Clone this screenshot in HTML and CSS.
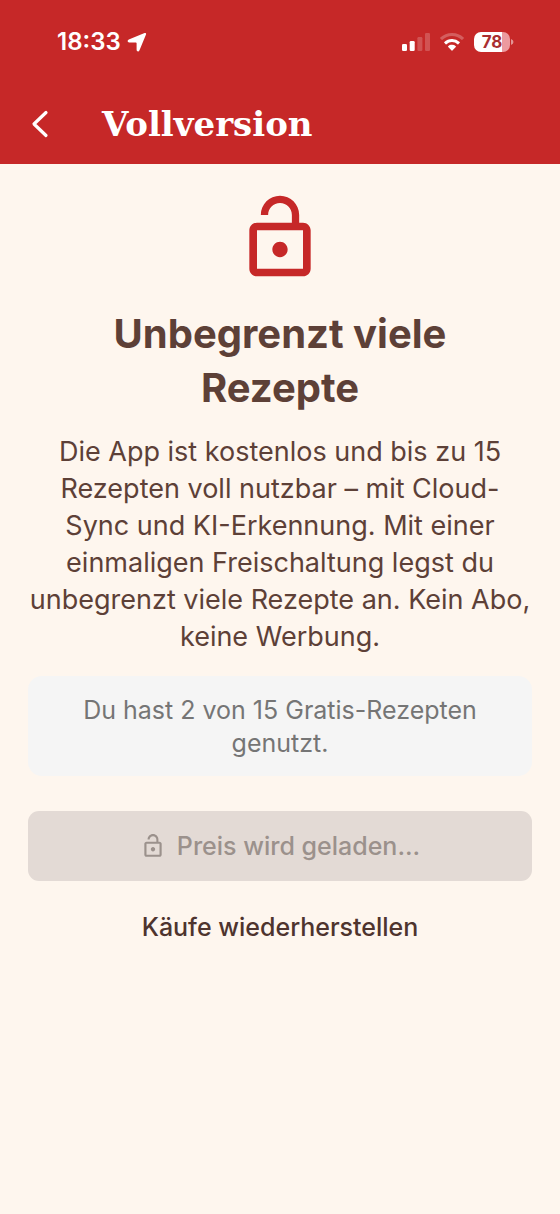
FILE: index.html
```html
<!DOCTYPE html>
<html lang="de">
<head>
<meta charset="utf-8">
<meta name="viewport" content="width=device-width, initial-scale=1">
<title>Vollversion</title>
<link rel="stylesheet" href="styles.css">
</head>
<body>
<header class="top">
  <div class="status">
    <div class="status-left">
      <span class="time">18:33</span>
      <svg class="location" viewBox="0 0 20 20" aria-hidden="true"><path d="M17.600 1 1.800 7.400C0 8.200.4 10.400 2.200 10.400h6.600c.5 0 .8.3.8.8v6.600c0 1.900 2.200 2.300 2.900.5L19 2.400c.4-1-.4-1.800-1.400-1.400z"/></svg>
    </div>
    <div class="status-right">
      <svg class="signal" viewBox="0 0 28 18" aria-hidden="true"><rect x="0" y="11" width="5" height="7" rx="1.3"/><rect x="7.7" y="8" width="5" height="10" rx="1.3"/><g opacity=".2"><rect x="15.400" y="4" width="5" height="14" rx="1.3"/><rect x="23" y="0" width="5" height="18" rx="1.3"/></g></svg>
      <svg class="wifi" viewBox="0 0 24 18" aria-hidden="true"><path opacity=".25" d="M12 0C7.400 0 3.200 1.800.3 4.600q-.4.400 0 .8l1.400 1.400q.4.400.8 0a13.800 13.800 0 0 1 19 0q.4.400.8 0l1.400-1.400q.4-.4 0-.8A16.800 16.800 0 0 0 12 0z"/><path d="M12 6c-3 0-5.700 1.100-7.700 3q-.4.400 0 .8l1.400 1.400q.4.400.8 0a8 8 0 0 1 11 0q.4.400.8 0l1.400-1.400q.4-.4 0-.8A11.200 11.200 0 0 0 12 6zM12 11.800c-1.500 0-2.800.5-3.800 1.400q-.4.400 0 .8l3.400 3.500q.4.400.8 0l3.400-3.500q.4-.4 0-.8a5.600 5.600 0 0 0-3.800-1.400z"/></svg>
      <div class="battery"><span class="level">78</span><svg class="cap" viewBox="0 0 3 8" aria-hidden="true"><path d="M0 1q2.500 1 2.500 3T0 7z"/></svg></div>
    </div>
  </div>
  <nav class="appbar">
    <button class="back" type="button" aria-label="Zurück"><svg viewBox="0 0 18 28" aria-hidden="true"><path d="M15 2.500 3 14l12 11.500"/></svg></button>
    <h1 class="title">Vollversion</h1>
  </nav>
</header>
<main class="content">
  <svg class="lock" viewBox="0 0 24 24" aria-hidden="true"><path d="M12 17c1.100 0 2-.9 2-2s-.9-2-2-2-2 .9-2 2 .9 2 2 2zm6-9h-1V6c0-2.760-2.240-5-5-5S7 3.240 7 6h1.900c0-1.710 1.390-3.100 3.100-3.100s3.100 1.390 3.100 3.100v2H6c-1.100 0-2 .9-2 2v10c0 1.100.9 2 2 2h12c1.100 0 2-.9 2-2V10c0-1.100-.9-2-2-2zm0 12H6V10h12v10z"/></svg>
  <h2 class="headline">Unbegrenzt viele Rezepte</h2>
  <p class="text">Die App ist kostenlos und bis zu 15 Rezepten voll nutzbar – mit Cloud-<br>Sync und KI-Erkennung. Mit einer einmaligen Freischaltung legst du unbegrenzt viele Rezepte an. Kein Abo, keine Werbung.</p>
  <p class="usage">Du hast 2 von 15 Gratis-Rezepten genutzt.</p>
  <button class="buy" type="button" disabled><svg class="buy-icon" viewBox="0 0 24 24" aria-hidden="true"><path d="M12 17c1.100 0 2-.9 2-2s-.9-2-2-2-2 .9-2 2 .9 2 2 2zm6-9h-1V6c0-2.760-2.240-5-5-5S7 3.240 7 6h1.900c0-1.710 1.390-3.100 3.100-3.100s3.100 1.390 3.100 3.100v2H6c-1.100 0-2 .9-2 2v10c0 1.100.9 2 2 2h12c1.100 0 2-.9 2-2V10c0-1.100-.9-2-2-2zm0 12H6V10h12v10z"/></svg>Preis wird geladen...</button>
  <button class="restore" type="button">Käufe wiederherstellen</button>
</main>
</body>
</html>
```

FILE: styles.css
```css
* { box-sizing: border-box; }
body {
  margin: 0;
  min-height: 100vh;
  background: #fef6ee;
  color: #5d4037;
  font-family: Inter, "Liberation Sans", sans-serif;
}
h1, h2, p { margin: 0; }
button { border: 0; background: none; padding: 0; font: inherit; color: inherit; }
svg { display: block; flex: none; }

.top { background: #c62828; color: #fff; }
.status {
  display: flex;
  align-items: center;
  justify-content: space-between;
  height: 84px;
  padding: 0 46px 0 57px;
}
.status svg { fill: #fff; }
.status-left { display: flex; align-items: center; gap: 6px; }
.time { font-size: 24px; font-weight: 600; line-height: 28px; }
.location { width: 20px; height: 20px; }
.status-right { display: flex; align-items: center; gap: 10px; }
.signal { width: 28px; height: 18px; }
.wifi { width: 24px; height: 18px; }
.battery { display: flex; align-items: center; gap: 1px; }
.level {
  width: 36px;
  border-radius: 7px;
  background: linear-gradient(90deg, #fff 79%, #ec9a9f 79%);
  color: #a92e31;
  font-size: 17px;
  font-weight: 700;
  line-height: 20px;
  text-align: center;
}
.cap { width: 3px; height: 8px; opacity: .5; }

.appbar { display: flex; align-items: center; height: 80px; padding: 0 31px; gap: 53px; }
.back svg { width: 18px; height: 28px; }
.back path { fill: none; stroke: #fff; stroke-width: 3.2; stroke-linecap: round; stroke-linejoin: round; }
.title {
  font-family: "DejaVu Serif", serif;
  font-size: 34px;
  font-weight: 700;
  line-height: 48px;
}

.content {
  display: flex;
  flex-direction: column;
  align-items: center;
  padding: 28px 28px 40px;
  text-align: center;
}
.lock { width: 92px; height: 92px; fill: #c62828; }
.headline {
  max-width: 420px;
  margin-top: 23px;
  font-size: 40px;
  font-weight: 700;
  line-height: 54px;
}
.text { margin-top: 18px; font-size: 27px; line-height: 37px; }
.usage {
  width: 100%;
  margin-top: 21px;
  padding: 18px 28px 16px;
  border-radius: 14px;
  background: #f5f5f5;
  color: #757575;
  font-size: 25px;
  line-height: 33px;
}
.buy {
  display: flex;
  align-items: center;
  justify-content: center;
  gap: 11px;
  width: 100%;
  min-height: 70px;
  margin-top: 35px;
  border-radius: 11px;
  background: #e3dad5;
  color: #9b918c;
  font-size: 25px;
  font-weight: 500;
}
.buy-icon { width: 26px; height: 26px; fill: currentColor; }
.restore {
  margin-top: 28px;
  color: #4e342e;
  font-size: 25px;
  font-weight: 500;
  line-height: 36px;
}
```
